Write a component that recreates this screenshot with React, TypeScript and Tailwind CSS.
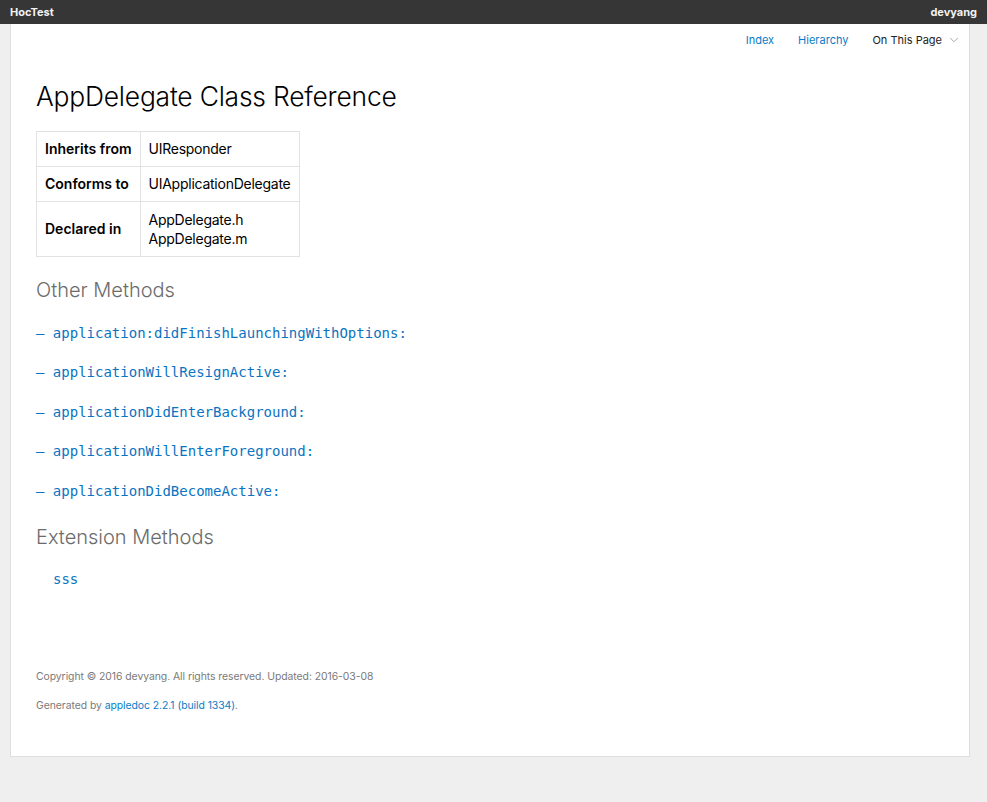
import { ChevronDown } from 'lucide-react'

const methods = [
  'application:didFinishLaunchingWithOptions:',
  'applicationWillResignActive:',
  'applicationDidEnterBackground:',
  'applicationWillEnterForeground:',
  'applicationDidBecomeActive:',
]

export default function App() {
  return (
    <div className="min-h-[802px] bg-[#efefef] font-['Inter','Liberation_Sans',sans-serif] text-black">
      {/* Top bar */}
      <div className="flex h-[24px] items-center justify-between bg-[#363636] px-[10px] text-[11px] font-bold text-[#f2f2f2]">
        <span>HocTest</span>
        <span>devyang</span>
      </div>

      {/* Page */}
      <div className="ml-[10px] w-[960px] border border-t-0 border-[#dedede] bg-white pb-[43px]">
        <div className="flex items-center justify-end gap-[24px] pr-[8px] pt-[8px] text-[11px]">
          <a className="text-[#0a7bc7]">Index</a>
          <a className="text-[#0a7bc7]">Hierarchy</a>
          <span className="flex items-center gap-[5px] text-[#222]">
            On This Page
            <ChevronDown size={14} strokeWidth={1.5} className="text-[#999]" />
          </span>
        </div>

        <div className="px-[25px]">
          <h1 className="mt-[30px] text-[26.4px] font-light leading-[34px] tracking-[-0.2px]">
            AppDelegate Class Reference
          </h1>

          <table className="mt-[18px] border-collapse text-[14px] leading-[19px]">
            <tbody>
              <tr>
                <th className="h-[35px] border border-[#e2e2e2] px-[8px] text-left font-semibold">Inherits from</th>
                <td className="border border-[#e2e2e2] px-[8px] tracking-[-0.25px]">UIResponder</td>
              </tr>
              <tr>
                <th className="h-[35px] border border-[#e2e2e2] px-[8px] text-left font-semibold">Conforms to</th>
                <td className="border border-[#e2e2e2] px-[8px] tracking-[-0.25px]">UIApplicationDelegate</td>
              </tr>
              <tr>
                <th className="border border-[#e2e2e2] px-[8px] text-left font-semibold">Declared in</th>
                <td className="border border-[#e2e2e2] px-[8px] py-[8px] tracking-[-0.25px]">
                  AppDelegate.h
                  <br />
                  AppDelegate.m
                </td>
              </tr>
            </tbody>
          </table>

          <h2 className="mt-[20px] text-[20px] font-light leading-[26px] text-[#6b6b6b]">Other Methods</h2>
          <ul className="mt-[21px] flex flex-col gap-[20px] font-['DejaVu_Sans_Mono',monospace] text-[14px] leading-[19.5px] text-[#0a74c2]">
            {methods.map((m) => (
              <li key={m}>– {m}</li>
            ))}
          </ul>

          <h2 className="mt-[23px] text-[20px] font-light leading-[26px] text-[#6b6b6b]">Extension Methods</h2>
          <div className="mt-[20px] pl-[17px] font-['DejaVu_Sans_Mono',monospace] text-[14px] leading-[19px] text-[#0a74c2]">
            sss
          </div>

          <div className="mt-[81px] text-[10.4px] leading-[14px] tracking-[-0.05px] text-[#7a7a7a]">
            <p>Copyright © 2016 devyang. All rights reserved. Updated: 2016-03-08</p>
            <p className="mt-[15px]">
              Generated by <a className="text-[#0a7bc7]">appledoc 2.2.1 (build 1334)</a>.
            </p>
          </div>
        </div>
      </div>
    </div>
  )
}
